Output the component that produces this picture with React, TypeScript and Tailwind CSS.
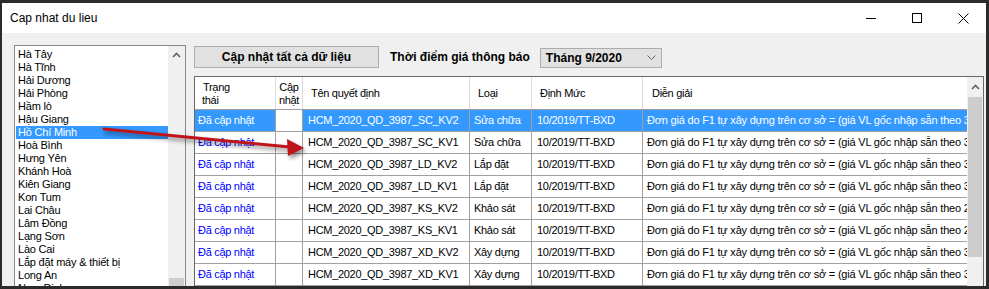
import React from "react";

const provinces = [
  "Hà Tây",
  "Hà Tĩnh",
  "Hải Dương",
  "Hải Phòng",
  "Hầm lò",
  "Hậu Giang",
  "Hồ Chí Minh",
  "Hoà Bình",
  "Hưng Yên",
  "Khánh Hoà",
  "Kiên Giang",
  "Kon Tum",
  "Lai Châu",
  "Lâm Đồng",
  "Lạng Sơn",
  "Lào Cai",
  "Lắp đặt máy & thiết bị",
  "Long An",
  "Nam Định",
];

const rows = [
  { code: "HCM_2020_QD_3987_SC_KV2", loai: "Sửa chữa", n: "3" },
  { code: "HCM_2020_QD_3987_SC_KV1", loai: "Sửa chữa", n: "3" },
  { code: "HCM_2020_QD_3987_LD_KV2", loai: "Lắp đặt", n: "3" },
  { code: "HCM_2020_QD_3987_LD_KV1", loai: "Lắp đặt", n: "3" },
  { code: "HCM_2020_QD_3987_KS_KV2", loai: "Khảo sát", n: "2" },
  { code: "HCM_2020_QD_3987_KS_KV1", loai: "Khảo sát", n: "2" },
  { code: "HCM_2020_QD_3987_XD_KV2", loai: "Xây dựng", n: "3" },
  { code: "HCM_2020_QD_3987_XD_KV1", loai: "Xây dựng", n: "3" },
];

function UpChevron() {
  return (
    <svg width="9" height="6" viewBox="0 0 9 6" className="block">
      <path d="M1 5 L4.5 1.5 L8 5" fill="none" stroke="#606060" strokeWidth="1.6" />
    </svg>
  );
}

export default function App() {
  return (
    <div className="relative w-[989px] h-[289px] overflow-hidden bg-[#2b2b2b] pt-[3px] pl-[2px] font-['Liberation_Sans',Arial,sans-serif] text-black">
      <div className="w-[984px] h-[283px] flex flex-col bg-[#f0f0f0] overflow-hidden">
        {/* Title bar */}
        <div className="h-[30px] shrink-0 bg-white flex items-center pl-[8px]">
          <span className="text-[12px] leading-none flex-1">Cap nhat du lieu</span>
          <div className="flex items-center h-full">
            <div className="w-[46px] h-full flex items-center justify-center">
              <svg width="10" height="10" viewBox="0 0 10 10">
                <path d="M0 5.5 H10" stroke="#000" strokeWidth="1" />
              </svg>
            </div>
            <div className="w-[46px] h-full flex items-center justify-center">
              <svg width="10" height="10" viewBox="0 0 10 10">
                <rect x="0.5" y="0.5" width="9" height="9" fill="none" stroke="#000" strokeWidth="1" />
              </svg>
            </div>
            <div className="w-[46px] h-full flex items-center justify-center">
              <svg width="11" height="11" viewBox="0 0 11 11">
                <path d="M0.5 0.5 L10.5 10.5 M10.5 0.5 L0.5 10.5" stroke="#000" strokeWidth="1" />
              </svg>
            </div>
          </div>
        </div>

        {/* Body */}
        <div className="flex-1 flex pl-[12px] pt-[12px] gap-[8px] overflow-hidden">
          {/* List box */}
          <div className="w-[172px] shrink-0 h-[260px] border border-[#828790] bg-white flex text-[11px] tracking-[-0.2px]">
            <div className="flex-1 pt-[2px] pl-[1px] overflow-hidden">
              {provinces.map((p) => (
                <div
                  key={p}
                  className={
                    p === "Hồ Chí Minh"
                      ? "h-[13px] leading-[13px] pl-[2px] whitespace-nowrap bg-[#3399ff] text-white"
                      : "h-[13px] leading-[13px] pl-[2px] whitespace-nowrap"
                  }
                >
                  {p}
                </div>
              ))}
            </div>
            <div className="w-[17px] shrink-0 bg-[#f0f0f0] flex flex-col">
              <div className="h-[17px] flex items-center justify-center pt-[1px]">
                <UpChevron />
              </div>
              <div className="flex-1" />
              <div className="h-[26px] mx-[1px] bg-[#cdcdcd]" />
            </div>
          </div>

          {/* Right panel */}
          <div className="flex-1 flex flex-col pt-[1px]">
            <div className="flex h-[22px] shrink-0">
              <div className="w-[185px] h-[22px] bg-[#e1e1e1] border border-[#adadad] flex items-center justify-center text-[12px] font-bold">
                Cập nhật tất cả dữ liệu
              </div>
              <div className="ml-[11px] self-center text-[12px] font-bold">Thời điểm giá thông báo</div>
              <div className="ml-[10px] mt-[2px] w-[122px] h-[20px] bg-[#e1e1e1] border border-[#adadad] flex items-center pl-[5px] pr-[3px] text-[12px] font-bold">
                <span className="flex-1">Tháng 9/2020</span>
                <svg width="9" height="6" viewBox="0 0 9 6" className="mr-[2px]">
                  <path d="M0.5 0.5 L4.5 4.5 L8.5 0.5" fill="none" stroke="#606060" strokeWidth="1" />
                </svg>
              </div>
            </div>

            {/* Grid */}
            <div className="mt-[8px] w-[790px] flex-1 border-l border-t border-r border-[#696969] bg-white flex overflow-hidden text-[11px] tracking-[-0.3px]">
              <div className="flex-1 flex flex-col overflow-hidden">
                {/* Header */}
                <div className="h-[33px] shrink-0 flex border-b border-[#a0a0a0] bg-white">
                  <div className="w-[81px] shrink-0 border-r border-[#dcdcdc] flex flex-col justify-center leading-[13px] pt-[1px]">
                    <span className="pl-[8px]">Trạng</span>
                    <span className="pl-[7px]">thái</span>
                  </div>
                  <div className="w-[27px] shrink-0 border-r border-[#dcdcdc] flex flex-col justify-center items-center leading-[13px] pt-[1px]">
                    <span>Cập</span>
                    <span>nhật</span>
                  </div>
                  <div className="w-[167px] shrink-0 border-r border-[#dcdcdc] flex items-center pl-[8px]">Tên quyết định</div>
                  <div className="w-[62px] shrink-0 border-r border-[#dcdcdc] flex items-center pl-[8px]">Loại</div>
                  <div className="w-[111px] shrink-0 border-r border-[#dcdcdc] flex items-center pl-[8px]">Định Mức</div>
                  <div className="flex-1 flex items-center pl-[9px]">Diễn giải</div>
                </div>
                {rows.map((r, i) => {
                  const sel = i === 0;
                  const cell = sel
                    ? "shrink-0 border-r border-[#a0a0a0] bg-[#3399ff] text-white flex items-center overflow-hidden whitespace-nowrap"
                    : "shrink-0 border-r border-[#a0a0a0] flex items-center overflow-hidden whitespace-nowrap";
                  return (
                    <div key={r.code} className="h-[22px] shrink-0 flex border-b border-[#a0a0a0]">
                      <div
                        className={
                          sel
                            ? "w-[81px] shrink-0 border-r border-[#a0a0a0] bg-[#3399ff] text-white flex items-center pl-[3px] whitespace-nowrap"
                            : "w-[81px] shrink-0 border-r border-[#a0a0a0] text-[#0000ff] flex items-center pl-[3px] whitespace-nowrap"
                        }
                      >
                        Đã cập nhật
                      </div>
                      <div className="w-[27px] shrink-0 border-r border-[#a0a0a0] bg-white" />
                      <div className={"w-[167px] pl-[5px] " + cell}>{r.code}</div>
                      <div className={"w-[62px] pl-[4px] " + cell}>{r.loai}</div>
                      <div className={"w-[111px] pl-[5px] " + cell}>10/2019/TT-BXD</div>
                      <div
                        className={
                          sel
                            ? "flex-1 min-w-0 pl-[4px] bg-[#3399ff] text-white flex items-center overflow-hidden whitespace-nowrap tracking-[-0.2px]"
                            : "flex-1 min-w-0 pl-[4px] flex items-center overflow-hidden whitespace-nowrap tracking-[-0.2px]"
                        }
                      >
                        Đơn giá do F1 tự xây dựng trên cơ sở = (giá VL gốc nhập sẵn theo {r.n}
                        987)
                      </div>
                    </div>
                  );
                })}
              </div>
              {/* Grid scrollbar */}
              <div className="w-[16px] shrink-0 bg-[#f0f0f0] flex flex-col">
                <div className="h-[20px] flex items-center justify-center">
                  <UpChevron />
                </div>
                <div className="h-[160px] mx-[1px] bg-[#cdcdcd]" />
                <div className="flex-1" />
              </div>
            </div>
          </div>
        </div>
      </div>

      {/* Red annotation arrow */}
      <svg
        className="absolute left-0 top-0 pointer-events-none"
        width="989"
        height="289"
        viewBox="0 0 989 289"
        style={{ filter: "drop-shadow(2px 3px 2px rgba(0,0,0,0.45))" }}
      >
        <path d="M104 129 L290 147" stroke="#c0141b" strokeWidth="3" strokeLinecap="round" />
        <path d="M287 139 L304 148 L288 156 Z" fill="#c0141b" />
      </svg>
    </div>
  );
}
